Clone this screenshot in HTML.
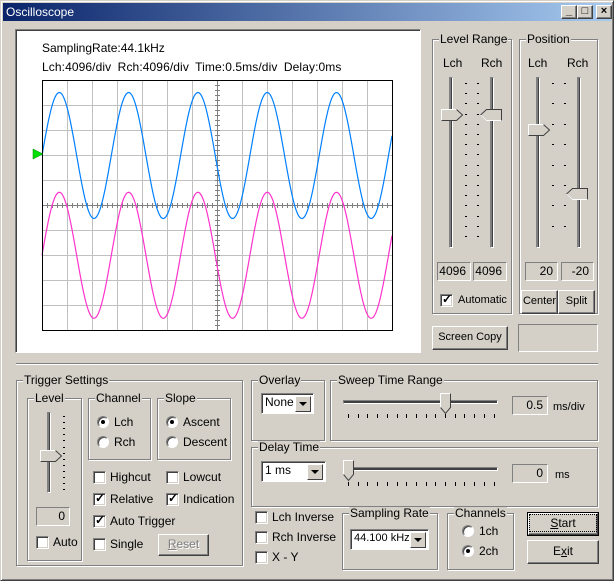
<!DOCTYPE html>
<html><head><meta charset="utf-8"><style>
*{box-sizing:border-box}
body{margin:0;width:614px;height:581px;background:#d4d0c8;font-family:"Liberation Sans",Arial,sans-serif;font-size:12px;color:#000;position:relative;overflow:hidden}
.a{position:absolute}
.win{left:0;top:0;width:614px;height:581px;border:1px solid;border-color:#d4d0c8 #404040 #404040 #d4d0c8;box-shadow:inset 1px 1px 0 #fff,inset -1px -1px 0 #808080}
.title{left:3px;top:3px;width:608px;height:18px;background:linear-gradient(90deg,#0a246a,#a6caf0);color:#fff;font-size:12px;line-height:18px;padding-left:3px}
.tb{top:5px;width:16px;height:14px;background:#d4d0c8;border:1px solid;border-color:#fff #404040 #404040 #fff;box-shadow:inset -1px -1px 0 #808080;font-size:11px;line-height:11px;text-align:center;font-weight:bold;color:#000}
.g{border:1px solid #808080;box-shadow:1px 1px 0 #fff,inset 1px 1px 0 #fff}
.gl{background:#d4d0c8;padding:0 1px;line-height:13px;top:-7px;left:6px}
.btn{border:1px solid;border-color:#fff #404040 #404040 #fff;box-shadow:inset -1px -1px 0 #808080;text-align:center;background:#d4d0c8}
.ed{border:1px solid;border-color:#808080 #fff #fff #808080;text-align:right;padding-right:4px;line-height:16px}
.cb{width:13px;height:13px;background:#fff;border:1px solid;border-color:#808080 #fff #fff #808080;box-shadow:inset 1px 1px 0 #404040,inset -1px -1px 0 #d4d0c8}
.rb{width:12px;height:12px;border-radius:50%;background:#fff;border:1px solid;border-color:#808080 #fff #fff #808080;box-shadow:inset 1px 1px 0 #404040}
.dot{position:absolute;left:3px;top:3px;width:4px;height:4px;border-radius:50%;background:#000}
.combo{background:#fff;border:1px solid;border-color:#808080 #fff #fff #808080;box-shadow:inset 1px 1px 0 #404040;padding-left:3px;line-height:17px;overflow:hidden;white-space:nowrap}
.arr{position:absolute;right:2px;top:2px;width:16px;height:16px;background:#d4d0c8;border:1px solid;border-color:#fff #404040 #404040 #fff}
.arr:after{content:"";position:absolute;left:3px;top:5px;border:4px solid transparent;border-top:4px solid #000;border-bottom:0}
.trv{width:4px;border:1px solid;border-color:#808080 #fff #fff #808080;background:#404040;box-shadow:inset 1px 0 0 #808080}
.trh{height:4px;border:1px solid;border-color:#808080 #fff #fff #808080;background:#404040}
</style></head><body>
<div class="a win"></div>
<div class="a title">Oscilloscope</div>
<div class="a tb" style="left:561px">_</div>
<div class="a tb" style="left:577px">□</div>
<div class="a tb" style="left:596px">×</div>

<div class="a" style="left:15px;top:29px;width:406px;height:324px;background:#fff;border:1px solid;border-color:#808080 #fff #fff #808080;box-shadow:inset 1px 1px 0 #404040"></div>
<div class="a" style="left:42px;top:41px;line-height:14px">SamplingRate:44.1kHz</div>
<div class="a" style="left:42px;top:60px;line-height:14px;word-spacing:3px;letter-spacing:0.1px">Lch:4096/div Rch:4096/div Time:0.5ms/div Delay:0ms</div>
<svg class="a" style="left:0;top:0" width="614" height="581" id="sv">
<g id="grid" stroke="#c0c0c0" stroke-width="1"></g>
<g id="tk" stroke="#808080" stroke-width="1"></g>
<line x1="42" y1="205.5" x2="392" y2="205.5" stroke="#808080"/>
<line x1="217.5" y1="80" x2="217.5" y2="330" stroke="#808080"/>
<polyline id="pb" fill="none" stroke="#0080ff" stroke-width="1.2"/>
<polyline id="pp" fill="none" stroke="#ff33cc" stroke-width="1.2"/>
<rect x="42.5" y="80.5" width="350" height="250" fill="none" stroke="#000"/>
<polygon points="33,149 43,154 33,159" fill="#00e000" stroke="#008000" stroke-width="0.5"/>
<g id="st" stroke="#000"></g>
</svg>

<div class="a g" style="left:432px;top:39px;width:80px;height:275px"><span class="a gl">Level Range</span></div>
<div class="a" style="left:443px;top:56px">Lch</div><div class="a" style="left:481px;top:56px">Rch</div>
<div class="a trv" style="left:449px;top:77px;height:171px"></div>
<div class="a trv" style="left:490px;top:77px;height:171px"></div>
<div class="a ed" style="left:437px;top:262px;width:34px;height:19px">4096</div>
<div class="a ed" style="left:473px;top:262px;width:34px;height:19px">4096</div>
<div class="a cb" style="left:440px;top:294px"></div><div class="a" style="left:442px;top:292px;font-weight:bold">✓</div>
<div class="a" style="left:458px;top:294px;font-size:11px">Automatic</div>

<div class="a g" style="left:519px;top:39px;width:79px;height:275px"><span class="a gl">Position</span></div>
<div class="a" style="left:528px;top:56px">Lch</div><div class="a" style="left:567px;top:56px">Rch</div>
<div class="a trv" style="left:536px;top:77px;height:171px"></div>
<div class="a trv" style="left:577px;top:77px;height:171px"></div>
<div class="a ed" style="left:525px;top:262px;width:33px;height:19px">20</div>
<div class="a ed" style="left:561px;top:262px;width:33px;height:19px">-20</div>
<div class="a btn" style="left:521px;top:290px;width:37px;height:24px;line-height:21px;font-size:11px">Center</div>
<div class="a btn" style="left:558px;top:290px;width:37px;height:24px;line-height:21px;font-size:11px">Split</div>
<div class="a btn" style="left:432px;top:326px;width:76px;height:24px;line-height:21px;font-size:11px">Screen Copy</div>
<div class="a ed" style="left:518px;top:324px;width:80px;height:28px"></div>

<div class="a" style="left:16px;top:363px;width:582px;height:2px;border-top:1px solid #808080;border-bottom:1px solid #fff"></div>

<div class="a g" style="left:16px;top:380px;width:227px;height:186px"><span class="a gl">Trigger Settings</span></div>
<div class="a g" style="left:27px;top:398px;width:55px;height:163px"><span class="a gl">Level</span></div>
<div class="a trv" style="left:47px;top:412px;height:81px"></div>
<div class="a ed" style="left:36px;top:507px;width:34px;height:19px">0</div>
<div class="a cb" style="left:36px;top:536px"></div><div class="a" style="left:53px;top:535px">Auto</div>
<div class="a g" style="left:88px;top:398px;width:63px;height:62px"><span class="a gl">Channel</span></div>
<div class="a rb" style="left:97px;top:416px"><span class="dot"></span></div><div class="a" style="left:114px;top:415px">Lch</div>
<div class="a rb" style="left:97px;top:436px"></div><div class="a" style="left:114px;top:435px">Rch</div>
<div class="a g" style="left:157px;top:398px;width:74px;height:62px"><span class="a gl">Slope</span></div>
<div class="a rb" style="left:166px;top:416px"><span class="dot"></span></div><div class="a" style="left:183px;top:415px">Ascent</div>
<div class="a rb" style="left:166px;top:436px"></div><div class="a" style="left:183px;top:435px">Descent</div>
<div class="a cb" style="left:93px;top:471px"></div><div class="a" style="left:110px;top:470px">Highcut</div>
<div class="a cb" style="left:166px;top:471px"></div><div class="a" style="left:183px;top:470px">Lowcut</div>
<div class="a cb" style="left:93px;top:493px"></div><div class="a" style="left:95px;top:491px;font-weight:bold">✓</div><div class="a" style="left:110px;top:492px">Relative</div>
<div class="a cb" style="left:166px;top:493px"></div><div class="a" style="left:168px;top:491px;font-weight:bold">✓</div><div class="a" style="left:183px;top:492px">Indication</div>
<div class="a cb" style="left:93px;top:515px"></div><div class="a" style="left:95px;top:513px;font-weight:bold">✓</div><div class="a" style="left:110px;top:514px">Auto Trigger</div>
<div class="a cb" style="left:93px;top:538px"></div><div class="a" style="left:110px;top:537px">Single</div>
<div class="a btn" style="left:158px;top:534px;width:51px;height:22px;line-height:19px;color:#808080;text-shadow:1px 1px 0 #fff"><u>R</u>eset</div>

<div class="a g" style="left:251px;top:380px;width:74px;height:61px"><span class="a gl">Overlay</span></div>
<div class="a combo" style="left:261px;top:393px;width:53px;height:21px">None<span class="arr"></span></div>
<div class="a g" style="left:330px;top:380px;width:268px;height:61px"><span class="a gl">Sweep Time Range</span></div>
<div class="a trh" style="left:343px;top:400px;width:155px"></div>
<div class="a ed" style="left:512px;top:396px;width:36px;height:19px">0.5</div>
<div class="a" style="left:553px;top:401px;font-size:11px">ms/div</div>
<div class="a g" style="left:251px;top:447px;width:347px;height:60px"><span class="a gl">Delay Time</span></div>
<div class="a combo" style="left:261px;top:461px;width:65px;height:21px">1 ms<span class="arr"></span></div>
<div class="a trh" style="left:343px;top:467px;width:155px"></div>
<div class="a ed" style="left:512px;top:464px;width:36px;height:19px">0</div>
<div class="a" style="left:555px;top:469px;font-size:11px">ms</div>

<div class="a cb" style="left:255px;top:511px"></div><div class="a" style="left:272px;top:510px">Lch Inverse</div>
<div class="a cb" style="left:255px;top:531px"></div><div class="a" style="left:272px;top:530px">Rch Inverse</div>
<div class="a cb" style="left:255px;top:551px"></div><div class="a" style="left:272px;top:550px">X - Y</div>
<div class="a g" style="left:342px;top:513px;width:96px;height:57px"><span class="a gl">Sampling Rate</span></div>
<div class="a combo" style="left:350px;top:529px;width:79px;height:21px;font-size:11px">44.100 kHz<span class="arr"></span></div>
<div class="a g" style="left:447px;top:513px;width:67px;height:57px"><span class="a gl">Channels</span></div>
<div class="a rb" style="left:462px;top:525px"></div><div class="a" style="left:479px;top:524px">1ch</div>
<div class="a rb" style="left:462px;top:545px"><span class="dot"></span></div><div class="a" style="left:479px;top:544px">2ch</div>
<div class="a" style="left:527px;top:512px;width:72px;height:24px;border:1px solid #000"><div class="a btn" style="left:0;top:0;width:70px;height:22px;line-height:18px"><span style="outline:1px dotted #000;padding:1px 20px"><u>S</u>tart</span></div></div>
<div class="a btn" style="left:527px;top:540px;width:72px;height:24px;line-height:21px">E<u>x</u>it</div>

<svg class="a" style="left:0;top:0" width="614" height="581" id="th"></svg>

<script>
var ns="http://www.w3.org/2000/svg";
function L(g,x1,y1,x2,y2,c){var l=document.createElementNS(ns,"line");l.setAttribute("x1",x1);l.setAttribute("y1",y1);l.setAttribute("x2",x2);l.setAttribute("y2",y2);if(c)l.setAttribute("stroke",c);document.getElementById(g).appendChild(l);}
for(var i=1;i<14;i++){var x=42.5+i*25;L("grid",x,80,x,330);}
for(var j=1;j<10;j++){var y=80.5+j*25;L("grid",42,y,392,y);}
for(var x=47;x<392;x+=5)L("tk",x+0.5,203,x+0.5,208);
for(var y=85;y<330;y+=5)L("tk",215,y+0.5,220,y+0.5);
var pb=[],pp=[];
for(var x=42;x<=392;x+=1){var s=Math.sin(2*Math.PI*(x-42)/69.3);pb.push(x+","+(155.5-63*s).toFixed(1));pp.push(x+","+(255.3-63*s).toFixed(1));}
document.getElementById("pb").setAttribute("points",pb.join(" "));
document.getElementById("pp").setAttribute("points",pp.join(" "));
function dash(x,y,w){L("st",x,y+0.5,x+w,y+0.5);}
for(var y=83;y<=245;y+=10.2){dash(465,Math.round(y),2);dash(477,Math.round(y),2);}
for(var y=83;y<=245;y+=20.4){dash(552,Math.round(y),2);dash(564,Math.round(y),2);}
for(var y=416;y<=490;y+=6.1){dash(63,Math.round(y),2);}
for(var i=0;i<16;i++){var x=Math.round(348+i*9.7)+0.5;L("st",x,414,x,418);L("st",x,482,x,486);}
var sv=document.getElementById("th");
function P(pts){var p=document.createElementNS(ns,"polygon");p.setAttribute("points",pts);p.setAttribute("fill","#d4d0c8");p.setAttribute("stroke","#404040");p.setAttribute("stroke-width","1");sv.appendChild(p);
 var q=document.createElementNS(ns,"polyline");q.setAttribute("points",pts.split(" ").slice(0,3).join(" "));q.setAttribute("fill","none");q.setAttribute("stroke","#fff");sv.appendChild(q);}
function R(x,y){P(x+","+(y+11)+" "+x+","+y+" "+(x+15)+","+y+" "+(x+21)+","+(y+5.5)+" "+(x+15)+","+(y+11)+" "+x+","+(y+11));}
function Lf(x,y){P((x+21)+","+(y+11)+" "+(x+6)+","+(y+11)+" "+x+","+(y+5.5)+" "+(x+6)+","+y+" "+(x+21)+","+y+" "+(x+21)+","+(y+11));}
function D(x,y){P(x+","+(y+14)+" "+x+","+y+" "+(x+10)+","+y+" "+(x+10)+","+(y+14)+" "+(x+5)+","+(y+20)+" "+x+","+(y+14));}
R(441.5,109.5);Lf(480.5,109.5);R(528.5,124.5);Lf(566.5,188.5);R(40.5,450.5);D(440.5,393.5);D(343.5,460.5);
</script>
</body></html>
